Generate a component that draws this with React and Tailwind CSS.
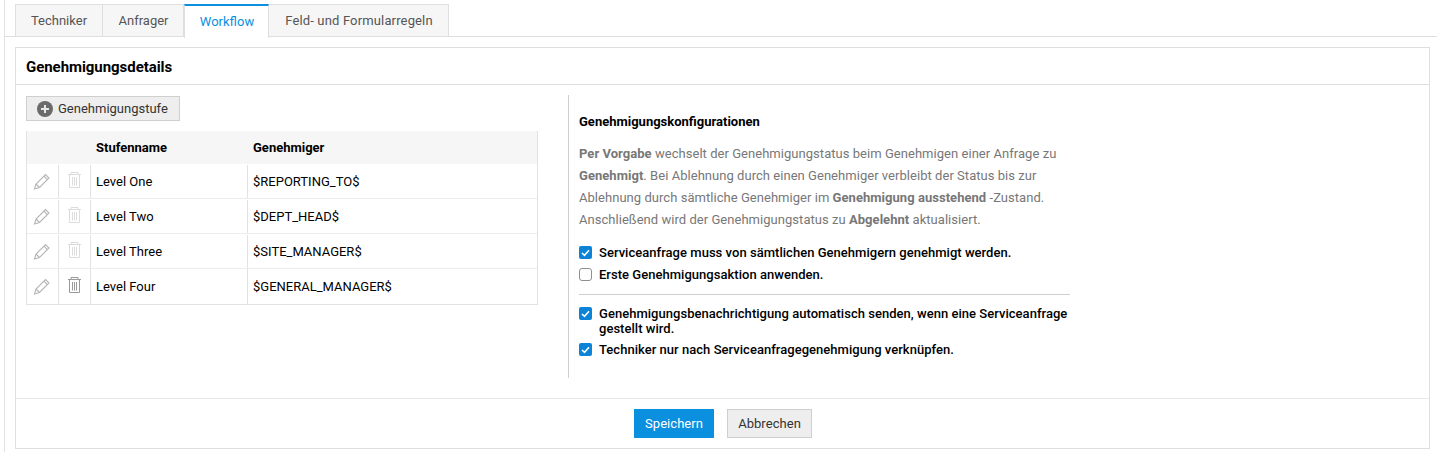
import React from "react";

const levels = [
  { name: "Level One", approver: "$REPORTING_TO$", active: false },
  { name: "Level Two", approver: "$DEPT_HEAD$", active: false },
  { name: "Level Three", approver: "$SITE_MANAGER$", active: false },
  { name: "Level Four", approver: "$GENERAL_MANAGER$", active: true },
];

function Pencil() {
  return (
    <svg width="17" height="17" viewBox="0 0 17 17" fill="none" stroke="#b5b5b5" strokeWidth="1.1">
      <path d="M1.5 16 L3 11 L12.5 1.5 L16 5 L6.5 14.5 Z" />
      <path d="M11 3.2 L14.3 6.6" />
      <path d="M3 11 L6.5 14.5" />
    </svg>
  );
}

function Trash({ active }) {
  return (
    <svg width="13" height="16" viewBox="0 0 13 16" fill="none" stroke={active ? "#9a9a9a" : "#dcdcdc"} strokeWidth="1">
      <path d="M0 2.5 H13" />
      <path d="M3 2 V0.5 H10 V2" />
      <path d="M1.5 3 V15.5 H11.5 V3" />
      <path d="M4.5 5 V13.5 M6.5 5 V13.5 M8.5 5 V13.5" />
    </svg>
  );
}

function Check({ checked, className }) {
  if (!checked) {
    return <span className={"w-[13px] h-[13px] shrink-0 rounded-[3px] border border-[#8f8f8f] bg-white " + className} />;
  }
  return (
    <span className={"w-[13px] h-[13px] shrink-0 rounded-[2px] bg-[#0b84d8] flex items-center justify-center " + className}>
      <svg width="9" height="8" viewBox="0 0 9 8" fill="none" stroke="#fff" strokeWidth="1.6">
        <path d="M1 4 L3.5 6.3 L8 1.2" />
      </svg>
    </span>
  );
}

function Option({ checked, children, className }) {
  return (
    <div className={"flex gap-[7px] text-black font-medium text-[13px] leading-[15px] tracking-[0.03px] " + className}>
      <Check checked={checked} className="mt-[1px]" />
      <span>{children}</span>
    </div>
  );
}

export default function App() {
  return (
    <div className="h-[452px] overflow-hidden bg-white font-['Roboto',sans-serif] text-[13px] text-[#333]">
      <div className="ml-1 h-full border-l border-[#e2e2e2] pt-1">
        <div className="flex h-[33px] border-b border-[#dfdfdf] pl-[10px]">
          <div className="w-[88px] h-[33px] flex items-center justify-center bg-[#f6f6f6] border border-[#dfdfdf] text-[#555]">Techniker</div>
          <div className="w-[81px] h-[33px] flex items-center justify-center pl-px bg-[#f6f6f6] border border-l-0 border-[#dfdfdf] text-[#555]">Anfrager</div>
          <div className="w-[85px] h-[34px] flex items-center justify-center pl-px bg-white border-x border-t-2 border-x-[#dfdfdf] border-t-[#0b8fdf] text-[#0b8fdf]">Workflow</div>
          <div className="w-[180px] h-[33px] flex items-center justify-center pl-px bg-[#f6f6f6] border border-l-0 border-[#dfdfdf] text-[#555] tracking-[0.15px]">Feld- und Formularregeln</div>
        </div>

        <div className="ml-[10px] mr-[7px] mt-[10px] h-[402px] border border-[#dfdfdf] flex flex-col">
          <div className="h-[37px] shrink-0 border-b border-[#dfdfdf] flex items-center px-[10px] pt-[3px] font-bold text-[15px] tracking-[-0.05px] text-black">
            Genehmigungsdetails
          </div>

          <div className="flex h-[314px] shrink-0 border-b border-[#e8e8e8]">
            <div className="w-[552px] pl-[10px] pt-[11px] shrink-0">
              <button className="h-[25px] w-[154px] flex items-center gap-[5px] pl-[10px] bg-[#eeeeee] border border-[#cfcfcf] text-[#333]">
                <span className="w-4 h-4 rounded-full bg-[#6b6b6b] flex items-center justify-center">
                  <svg width="10" height="10" viewBox="0 0 10 10" stroke="#e8e8e8" strokeWidth="2">
                    <path d="M5 1 V9 M1 5 H9" />
                  </svg>
                </span>
                Genehmigungstufe
              </button>

              <div className="mt-[10px] w-[512px] border-x border-b border-[#e2e2e2]">
                <div className="flex h-[33px] items-center bg-[#f6f6f6] font-bold text-black">
                  <div className="w-[69px]" />
                  <div className="w-[157px]">Stufenname</div>
                  <div>Genehmiger</div>
                </div>
                {levels.map((l, i) => (
                  <div key={l.name} className={i < levels.length - 1 ? "flex h-[35px] items-center pt-px border-b border-[#ececec]" : "flex h-[35px] items-center"}>
                    <div className="w-[32px] h-full flex items-center justify-center pr-[2px] border-r border-[#e2e2e2]">
                      <Pencil />
                    </div>
                    <div className="w-[32px] h-full flex items-center justify-center border-r border-[#e2e2e2] pb-[4px]">
                      <Trash active={l.active} />
                    </div>
                    <div className="w-[157px] h-full flex items-center pl-[5px] border-r border-[#e2e2e2] text-black">{l.name}</div>
                    <div className="pl-[5px] text-black">{l.approver}</div>
                  </div>
                ))}
              </div>
            </div>

            <div className="mt-[10px] h-[283px] w-[502px] border-l border-[#cfcfcf] pl-[10px] pt-[19px]">
              <div className="font-bold text-black leading-[15px]">Genehmigungskonfigurationen</div>
              <p className="mt-[14px] w-[490px] text-[#777] leading-[22px] tracking-[0.04px]">
                <b className="font-bold">Per Vorgabe</b> wechselt der Genehmigungstatus beim Genehmigen einer Anfrage zu <b className="font-bold">Genehmigt</b>. Bei Ablehnung durch einen Genehmiger verbleibt der Status bis zur Ablehnung durch sämtliche Genehmiger im <b className="font-bold">Genehmigung ausstehend</b> -Zustand. Anschließend wird der Genehmigungstatus zu <b className="font-bold">Abgelehnt</b> aktualisiert.
              </p>
              <Option checked className="mt-[14px]">Serviceanfrage muss von sämtlichen Genehmigern genehmigt werden.</Option>
              <Option className="mt-[7px]">Erste Genehmigungsaktion anwenden.</Option>
              <div className="mt-[12px] h-px bg-[#cfcfcf] w-[491px]" />
              <Option checked className="mt-[11px]">
                Genehmigungsbenachrichtigung automatisch senden, wenn eine Serviceanfrage gestellt wird.
              </Option>
              <Option checked className="mt-[6px]">Techniker nur nach Serviceanfragegenehmigung verknüpfen.</Option>
            </div>
          </div>

          <div className="flex-1 flex justify-center gap-[13px] pt-[10px] pl-px">
            <button className="w-[80px] h-[29px] bg-[#0b8fdf] text-white tracking-[0.05px]">Speichern</button>
            <button className="w-[85px] h-[29px] bg-[#eeeeee] border border-[#cfcfcf] text-[#333] tracking-[0.05px]">Abbrechen</button>
          </div>
        </div>
      </div>
    </div>
  );
}
